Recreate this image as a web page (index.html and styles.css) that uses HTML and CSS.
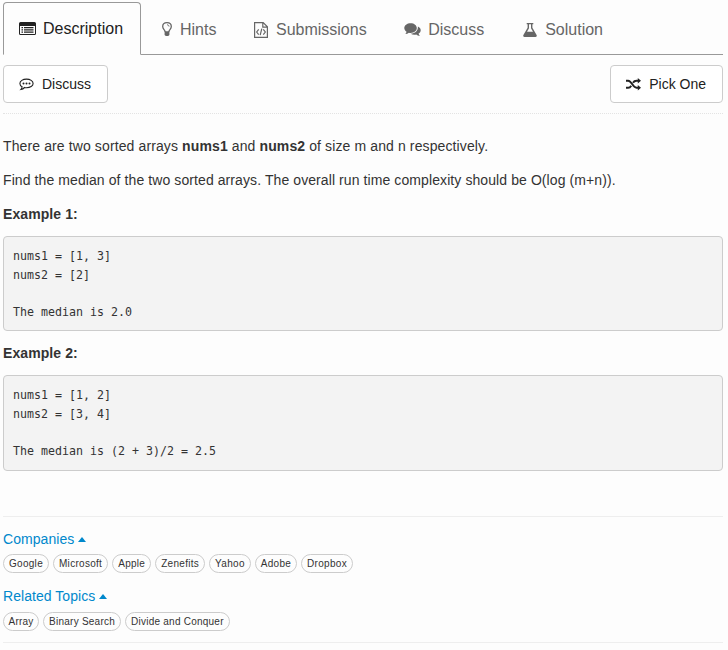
FILE: index.html
```html
<!DOCTYPE html>
<html lang="en">
<head>
<meta charset="utf-8">
<title>Median of Two Sorted Arrays</title>
<link rel="stylesheet" href="styles.css">
</head>
<body>
<nav class="tabs">
  <a class="tab active"><svg class="icon" width="17" height="14" viewBox="0 0 17 14"><path fill="currentColor" fill-rule="evenodd" d="M1.5 0h14Q17 0 17 1.5v10q0 1.5-1.5 1.5h-14Q0 13 0 11.500v-10Q0 0 1.500 0zM1 4v7.500q0 .5.5.5h14q.5 0 .5-.5V4z"/><path fill="currentColor" d="M2.500 5h1.500v1.200H2.500zm2.500 0h9.500v1.200H5zM2.500 7.300h1.500v1.200H2.500zm2.500 0h9.500v1.200H5zM2.500 9.600h1.500v1.200H2.500zm2.500 0h9.500v1.200H5z"/></svg><span>Description</span></a>
  <a class="tab hints"><svg class="icon" width="10" height="15" viewBox="0 0 10 15"><path fill="none" stroke="currentColor" stroke-width="1.300" d="M3.200 10C3.200 7.800.7 7.200.7 4.600.7 2.200 2.600.7 5 .7s4.300 1.500 4.300 3.900c0 2.600-2.500 3.200-2.500 5.400"/><path fill="none" stroke="currentColor" d="M5 2.800c1.200 0 2 .7 2 1.700"/><path fill="currentColor" d="M2.600 9.300h4.800v3.800L6.200 14H3.800l-1.200-.9z"/></svg><span>Hints</span></a>
  <a class="tab submissions"><svg class="icon" width="14" height="16" viewBox="0 0 14 16"><path fill="none" stroke="currentColor" stroke-width="1.200" d="M.6.600h8.600l4.200 4.200v10.600H.6zM8.800.600v4.600h4.600"/><path fill="none" stroke="currentColor" stroke-width="1.200" d="M4.700 7.400 2.700 10l2 2.600M9.300 7.400l2 2.600-2 2.600M7.800 6.700l-1.600 6.500"/></svg><span>Submissions</span></a>
  <a class="tab talk"><svg class="icon" width="17" height="14" viewBox="0 0 17 14"><g fill="currentColor"><path d="M6.600.3c3.500 0 6.200 2.100 6.200 4.800s-2.700 4.800-6.200 4.800c-.6 0-1.200-.1-1.700-.2-1 .8-2.200 1.300-3.600 1.400.7-.7 1.100-1.400 1.200-2.400C1.100 7.900.3 6.600.3 5.100.3 2.400 3.100.3 6.600.3z"/><path d="M13.900 3.600c1.700.7 2.800 2 2.800 3.600 0 1.400-.8 2.600-2.100 3.400.1.900.6 1.700 1.300 2.300-1.500 0-2.700-.5-3.700-1.300-2 .4-4.100.1-5.600-.9 4.300.1 7.700-2.800 7.300-7.100z"/></g></svg><span>Discuss</span></a>
  <a class="tab solution"><svg class="icon" width="14" height="14" viewBox="0 0 14 14"><path fill="currentColor" fill-rule="evenodd" d="M3.700 0h6.600v1.200h-.9v3.600l4.200 7.200c.5 1 .1 2-1 2H1.400c-1.100 0-1.500-1-1-2l4.200-7.200V1.200h-.9zM6 1.200v4L4 8.700h6L8 5.200v-4z"/></svg><span>Solution</span></a>
</nav>
<div class="actions">
  <button class="btn"><svg class="icon" width="15" height="13" viewBox="0 0 15 13"><path fill="none" stroke="currentColor" stroke-width="1.100" d="M7.500 1.100c3.700 0 6.600 1.900 6.600 4.300s-2.900 4.300-6.600 4.300c-.7 0-1.300 0-1.900-.2-1 1-2.200 1.700-3.700 2 .7-.8 1.100-1.600 1.200-2.700C1.700 8 .9 6.800.9 5.400.9 3 3.800 1.100 7.500 1.100z"/><g fill="currentColor"><circle cx="4.500" cy="5.400" r="1"/><circle cx="7.500" cy="5.400" r="1"/><circle cx="10.500" cy="5.400" r="1"/></g></svg><span>Discuss</span></button>
  <button class="btn"><svg class="icon" width="15" height="13" viewBox="0 0 15 13"><path fill="none" stroke="currentColor" stroke-width="1.900" d="M0 2.700h2.200c3.600 0 4.300 7.100 8.300 7.100H13M0 9.800h2.200c1.500 0 2.400-1 3-2.100M7 4.700c.7-1.200 1.700-2 3.500-2H13"/><path fill="currentColor" d="m11.800 0 3.200 2.700-3.200 2.700zM11.800 7.100 15 9.800l-3.200 2.700z"/></svg><span>Pick One</span></button>
</div>
<main class="content">
  <p class="intro">There are two sorted arrays <b>nums1</b> and <b>nums2</b> of size m and n respectively.</p>
  <p>Find the median of the two sorted arrays. The overall run time complexity should be O(log (m+n)).</p>
  <p><b>Example 1:</b></p>
  <pre>nums1 = [1, 3]
nums2 = [2]

The median is 2.0</pre>
  <p><b>Example 2:</b></p>
  <pre>nums1 = [1, 2]
nums2 = [3, 4]

The median is (2 + 3)/2 = 2.5</pre>
</main>
<footer class="meta">
  <a class="heading">Companies<i class="caret"></i></a>
  <div class="tags companies"><span>Google</span><span>Microsoft</span><span>Apple</span><span>Zenefits</span><span>Yahoo</span><span>Adobe</span><span>Dropbox</span></div>
  <a class="heading">Related Topics<i class="caret"></i></a>
  <div class="tags topics"><span>Array</span><span>Binary Search</span><span>Divide and Conquer</span></div>
</footer>
</body>
</html>
```
FILE: styles.css
```css
* { box-sizing: border-box; }
body {
  margin: 0;
  padding: 2px 5px 0 3px;
  background: #fdfdfd;
  color: #333;
  font: 14px/20px "Liberation Sans", Arial, sans-serif;
}
.icon { flex: none; display: block; }
.tabs {
  display: flex;
  height: 53px;
  border-bottom: 1px solid #999;
}
.tab {
  display: flex;
  align-items: center;
  gap: 7px;
  height: 53px;
  padding-top: 2px;
  color: #666;
  font-size: 16px;
}
.tab.active {
  width: 138px;
  padding: 0 0 0 15px;
  border: 1px solid #999;
  border-bottom-color: #fdfdfd;
  border-radius: 4px 4px 0 0;
  color: #212121;
}
.hints { margin-left: 21px; gap: 8px; }
.submissions { margin-left: 37.500px; gap: 8px; }
.talk { margin-left: 37.500px; }
.solution { margin-left: 39px; gap: 8px; }
.actions {
  display: flex;
  justify-content: space-between;
  height: 59px;
  padding-top: 10px;
  border-bottom: 1px dotted #e3e3e3;
}
.btn {
  display: flex;
  align-items: center;
  gap: 8px;
  height: 38px;
  padding: 0 16px 0 15px;
  border: 1px solid #ccc;
  border-radius: 4px;
  background: #fff;
  color: #212121;
  font: inherit;
}
.content { padding-top: 22px; }
p { margin: 0 0 14px; letter-spacing: .09px; }
.intro { letter-spacing: .115px; }
.content p:has(+ pre) { margin-bottom: 12px; }
pre {
  height: 95px;
  margin: 0 0 12px;
  padding: 10px 9px;
  border: 1px solid #ccc;
  border-radius: 4px;
  background: #f3f3f3;
  font: 11.630px/18.600px "DejaVu Sans Mono", monospace;
}
pre:last-child { height: 96px; margin-bottom: 45px; }
.meta {
  height: 127px;
  padding-top: 12px;
  border: solid #eee;
  border-width: 1px 0;
}
.heading {
  display: flex;
  align-items: center;
  color: #0088cc;
  letter-spacing: .05px;
}
.caret {
  margin: 1px 0 0 4px;
  border: 4.500px solid transparent;
  border-width: 0 4.500px 5px;
  border-bottom-color: #0088cc;
}
.tags { display: flex; gap: 4px; margin: 5px 0 13px; }
.tags.topics { margin-top: 6px; }
.tags span {
  height: 19px;
  padding: 0 5px;
  border: 1px solid #ccc;
  border-radius: 10px;
  font-size: 10px;
  line-height: 17px;
  letter-spacing: .29px;
}
.tags.topics span { letter-spacing: .24px; }
.topics span:first-child { padding: 0 4.500px; }
```
